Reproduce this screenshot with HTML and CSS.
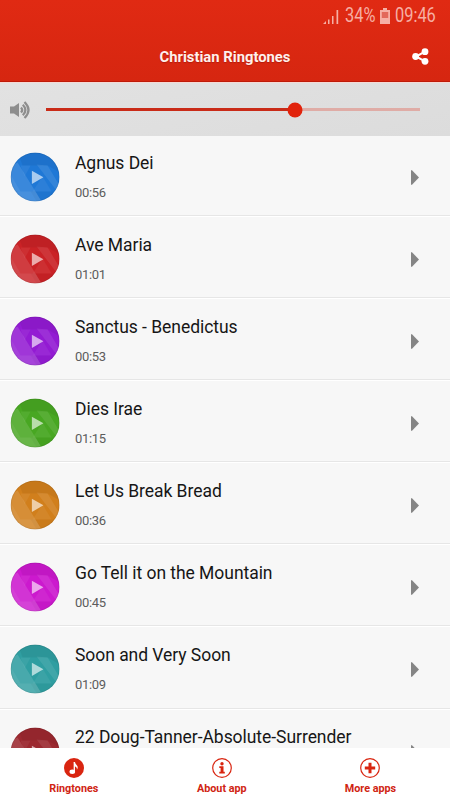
FILE: index.html
```html
<!DOCTYPE html>
<html lang="en">
<head>
<meta charset="utf-8">
<title>Christian Ringtones</title>
<link rel="stylesheet" href="styles.css">
</head>
<body>
<svg class="defs" aria-hidden="true">
  <defs>
    <clipPath id="disc"><circle cx="24.5" cy="24.5" r="24.400"/></clipPath>
    <symbol id="play" viewBox="-0.6 -0.5 50 50">
      <g clip-path="url(#disc)">
        <rect width="49" height="49" fill="currentColor"/>
        <g fill="#fff">
          <path d="M0 13 7 10 31 49H0z" opacity=".12"/>
          <path d="M0 22 10 39H0z" opacity=".06"/>
          <path d="M7 39H25L31 49H0z" opacity=".07"/>
          <path d="M10 13H20L14 24z" opacity=".06"/>
          <path d="M26 12 37 13 49 33V42z" opacity=".09"/>
          <path d="M22 39 32 24 41 39z" opacity=".06"/>
        </g>
        <path d="M7 0H49V20L37 13H12z" fill="#000" opacity=".05"/>
        <path d="M20 39H49V49H26z" fill="#000" opacity=".03"/>
      </g>
      <circle cx="24.5" cy="24.5" r="24" fill="none" stroke="#000" stroke-width=".8" opacity=".1"/>
      <path d="M21.300 18.200 32.800 24.800 21.300 31.500z" fill="#fff" opacity=".62"/>
    </symbol>
    <symbol id="arrow" viewBox="0 0 8 15"><path d="M0 0.300 1 0.300 8 7.500 1 14.700H0z" fill="#858585"/></symbol>
  </defs>
</svg>
<div class="app">
  <header class="header">
    <div class="status">
      <svg class="signal" width="16" height="15" viewBox="0 0 16 15" fill="currentColor"><path d="M0 15 3 12V15zM5 10.500H6.500V15H5zM9 7H10.500V15H9zM13.500 1H15.200V15H13.500z"/></svg>
      <span class="percent">34%</span>
      <svg class="battery" width="10" height="16" viewBox="0 0 10 16" fill="currentColor"><path d="M3 0H7V2H10V16H0V2H3z"/><path d="M1.800 4H8.200V10H1.800z" fill="#e2685a"/></svg>
      <span class="clock">09:46</span>
    </div>
    <div class="titlebar">
      <h1>Christian Ringtones</h1>
      <svg class="share" width="17" height="17" viewBox="0 0 17 17" fill="#fff"><path d="M13 3.600 4 8.500 13 13.400" fill="none" stroke="#fff" stroke-width="2"/><circle cx="3.600" cy="8.500" r="3.400"/><circle cx="13" cy="3.700" r="3.400"/><circle cx="13" cy="13.300" r="3.400"/></svg>
    </div>
  </header>
  <div class="volume">
    <svg class="speaker" width="21" height="18" viewBox="0 0 21 18"><path d="M0 5.500H4L9 2V16L4 12.500H0z" fill="#8e8e8e"/><g fill="none" stroke="#8e8e8e" stroke-width="2.200"><path d="M11 6.500Q13.500 9 11 11.500"/><path d="M12.800 3.700Q18 9 12.800 14.300"/><path d="M14.500 1Q22.500 9 14.500 17"/></g></svg>
    <div class="track"><div class="fill"></div><div class="thumb"></div></div>
  </div>
  <main class="list">
    <div class="row"><svg class="disc blue"><use href="#play"/></svg><div class="info"><div class="name">Agnus Dei</div><div class="time">00:56</div></div><svg class="go"><use href="#arrow"/></svg></div>
    <div class="row"><svg class="disc red"><use href="#play"/></svg><div class="info"><div class="name">Ave Maria</div><div class="time">01:01</div></div><svg class="go"><use href="#arrow"/></svg></div>
    <div class="row"><svg class="disc purple"><use href="#play"/></svg><div class="info"><div class="name">Sanctus - Benedictus</div><div class="time">00:53</div></div><svg class="go"><use href="#arrow"/></svg></div>
    <div class="row"><svg class="disc green"><use href="#play"/></svg><div class="info"><div class="name">Dies Irae</div><div class="time">01:15</div></div><svg class="go"><use href="#arrow"/></svg></div>
    <div class="row"><svg class="disc orange"><use href="#play"/></svg><div class="info"><div class="name">Let Us Break Bread</div><div class="time">00:36</div></div><svg class="go"><use href="#arrow"/></svg></div>
    <div class="row"><svg class="disc magenta"><use href="#play"/></svg><div class="info"><div class="name">Go Tell it on the Mountain</div><div class="time">00:45</div></div><svg class="go"><use href="#arrow"/></svg></div>
    <div class="row"><svg class="disc teal"><use href="#play"/></svg><div class="info"><div class="name">Soon and Very Soon</div><div class="time">01:09</div></div><svg class="go"><use href="#arrow"/></svg></div>
    <div class="row"><svg class="disc maroon"><use href="#play"/></svg><div class="info"><div class="name">22 Doug-Tanner-Absolute-Surrender</div></div><svg class="go"><use href="#arrow"/></svg></div>
  </main>
  <nav class="tabs">
    <div class="tab"><svg width="20" height="20" viewBox="0 0 20 20"><circle cx="10" cy="10" r="10" fill="#d92510"/><path d="M10.300 4.300V13.200" stroke="#fff" stroke-width="1.300"/><path d="M9.700 4H11Q11.300 6 12.800 7.200 14.600 9 12.900 11.700 13.300 8.900 10.500 8.200z" fill="#fff"/><ellipse cx="8.300" cy="13.700" rx="2.800" ry="2.200" fill="#fff"/></svg><span>Ringtones</span></div>
    <div class="tab"><svg width="20" height="20" viewBox="0 0 20 20"><circle cx="10" cy="10" r="9.300" fill="none" stroke="#d92510" stroke-width="1.200"/><circle cx="10" cy="5.700" r="1.700" fill="#d92510"/><path d="M7.300 8.300H11.500V13.800H12.800V15.600H7.300V13.800H8.600V10H7.300z" fill="#d92510"/></svg><span>About app</span></div>
    <div class="tab"><svg width="20" height="20" viewBox="0 0 20 20"><circle cx="10" cy="10" r="9.300" fill="none" stroke="#d92510" stroke-width="1.200"/><path d="M10 4.800V15.200M4.800 10H15.200" stroke="#d92510" stroke-width="3"/></svg><span>More apps</span></div>
  </nav>
</div>
</body>
</html>
```
FILE: styles.css
```css
* { box-sizing: border-box; }
body { margin: 0; font-family: Roboto, sans-serif; background: #fff; }
.defs { position: absolute; width: 0; height: 0; }
.app { width: 450px; height: 800px; display: flex; flex-direction: column; overflow: hidden; }
.header { flex: none; height: 82px; background: linear-gradient(#e02a13, #d62610); border-bottom: 1px solid #bf1a08; }
.status { height: 32px; padding: 0 12px 0 0; display: flex; justify-content: flex-end; align-items: center; color: #f6afa4; font-size: 19.500px; line-height: 32px; }
.signal { margin-right: 6px; }
.percent, .clock { display: block; white-space: nowrap; transform-origin: 0 50%; transform: scaleX(.84); }
.percent { width: 30px; }
.battery { margin: 0 5px; }
.clock { width: 43px; }
.titlebar { height: 49px; display: grid; grid-template-columns: 1fr auto 1fr; align-items: center; }
.titlebar h1 { grid-column: 2; margin: 0; font-size: 14.800px; line-height: 20px; font-weight: 700; color: #fff0ec; text-shadow: 0 1px 1px rgba(100, 0, 0, .3); }
.share { justify-self: end; margin-right: 21.500px; }
.volume { flex: none; height: 54px; display: flex; align-items: center; padding: 0 30px 0 10px; background: linear-gradient(165deg, #e2e2e2, #dcdcdc); border-top: 1px solid #f5d9d5; }
.speaker { margin-right: 15px; }
.track { position: relative; flex: 1; height: 3px; background: #dfaca6; }
.fill { width: 66.500%; height: 3px; background: #c92b18; }
.thumb { position: absolute; left: 66.500%; top: 50%; width: 15px; height: 15px; border-radius: 50%; background: #e1230c; transform: translate(-50%, -50%); }
.list { flex: none; height: 612px; overflow: hidden; background: #f7f7f7; }
.row { height: 82.100px; padding: 17px 31px 0 10px; display: flex; align-items: flex-start; border-bottom: 1px solid #fff; box-shadow: inset 0 -1px #e6e6e6; }
.row:first-child { height: 81px; padding-top: 16px; }
.disc { flex: none; width: 50px; height: 50px; margin-right: 15px; }
.info { flex: 1; }
.name { margin-top: -.500px; font-size: 17.500px; line-height: 22px; letter-spacing: -.045px; color: #161616; white-space: nowrap; }
.time { margin-top: 10.400px; font-size: 13px; line-height: 18px; letter-spacing: -.350px; color: #5c5c5c; }
.go { width: 8px; height: 15px; margin-top: 18px; }
.blue { color: #1f78d6; }
.red { color: #ca2226; }
.purple { color: #931bd3; }
.green { color: #48a722; }
.orange { color: #d17f1c; }
.magenta { color: #cc19ce; }
.teal { color: #2f9ea1; }
.maroon { color: #9c2930; }
.tabs { flex: none; height: 52px; background: #fff; display: grid; grid-template-columns: 147.600px 148.400px 149px; }
.tab { display: flex; flex-direction: column; align-items: center; padding-top: 9.500px; font-size: 10.800px; line-height: 14px; font-weight: 700; color: #d02412; }
.tab span { margin-top: 4px; }
```
